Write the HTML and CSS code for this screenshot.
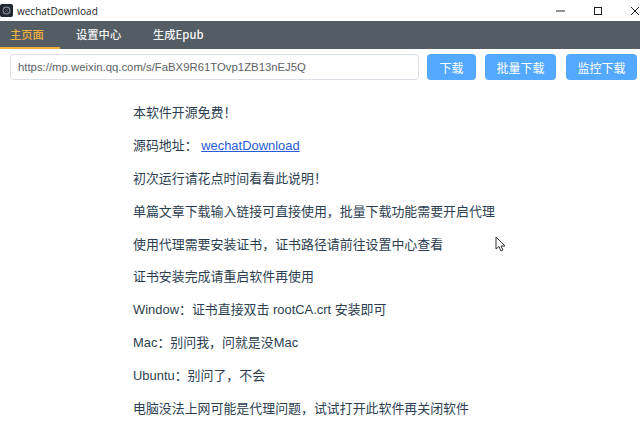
FILE: index.html
```html
<!DOCTYPE html>
<html lang="zh">
<head>
<meta charset="utf-8">
<title>wechatDownload</title>
<link rel="stylesheet" href="styles.css">
</head>
<body>
<div class="app">
  <header class="titlebar">
    <div class="title-left">
      <svg class="logo" width="13" height="13" viewBox="0 0 13 13"><rect width="13" height="13" rx="2" fill="#1f2630"/><circle cx="6.5" cy="6.5" r="3.4" fill="none" stroke="#7d8794" stroke-width="1.2"/><path d="M3 3l7 7M10 3l-7 7" stroke="#56606c" stroke-width="1"/></svg>
      <span class="app-name">wechatDownload</span>
    </div>
    <div class="win-controls">
      <svg class="win-icon" width="10" height="10" viewBox="0 0 10 10"><path d="M0 5h9" stroke="#222" stroke-width="1"/></svg>
      <svg class="win-icon" width="10" height="10" viewBox="0 0 10 10"><rect x="1.5" y="1.5" width="7" height="7" fill="none" stroke="#222" stroke-width="1"/></svg>
      <svg class="win-icon" width="10" height="10" viewBox="0 0 10 10"><path d="M1 1l8 8M9 1l-8 8" stroke="#222" stroke-width="1"/></svg>
    </div>
  </header>
  <nav class="menu">
    <div class="menu-item active">主页面</div>
    <div class="menu-item">设置中心</div>
    <div class="menu-item">生成Epub</div>
  </nav>
  <section class="toolbar">
    <input class="url" type="text" value="https://mp.weixin.qq.com/s/FaBX9R61TOvp1ZB13nEJ5Q">
    <button class="btn btn-s">下载</button>
    <button class="btn btn-m">批量下载</button>
    <button class="btn">监控下载</button>
  </section>
  <main class="content">
    <p>本软件开源免费！</p>
    <p>源码地址： <a href="#">wechatDownload</a></p>
    <p>初次运行请花点时间看看此说明！</p>
    <p>单篇文章下载输入链接可直接使用，批量下载功能需要开启代理</p>
    <p>使用代理需要安装证书，证书路径请前往设置中心查看</p>
    <p>证书安装完成请重启软件再使用</p>
    <p>Window：证书直接双击 rootCA.crt 安装即可</p>
    <p>Mac：别问我，问就是没Mac</p>
    <p>Ubuntu：别问了，不会</p>
    <p>电脑没法上网可能是代理问题，试试打开此软件再关闭软件</p>
  </main>
  <svg class="cursor" width="12" height="17" viewBox="0 0 12 17"><path d="M1 1v12l3-2.5 2 4.5 2-1-2-4h4z" fill="#fff" stroke="#333" stroke-width="1"/></svg>
</div>
</body>
</html>
```
FILE: styles.css
```css
* { box-sizing: border-box; }
html, body { margin: 0; padding: 0; height: 100%; overflow: hidden; background: #fff; }
body { font-family: "Liberation Sans", "Noto Sans CJK SC", sans-serif; }
.app { position: relative; width: 640px; height: 424px; overflow: hidden; }
.titlebar { height: 21px; display: flex; align-items: center; justify-content: space-between; }
.title-left { display: flex; align-items: center; gap: 4px; }
.logo { display: block; }
.app-name { font-size: 10px; color: #222; font-family: "Open Sans", sans-serif; }
.win-controls { display: flex; gap: 27px; align-items: center; width: 84px; }
.win-controls .win-icon { display: block; flex: none; }
.menu { height: 28px; background: #545c64; display: flex; font-size: 11.3px; font-weight: 500; font-family: "Noto Sans CJK SC", sans-serif; }
.menu-item { display: flex; align-items: center; color: #fff; opacity: .95; border-bottom: 2px solid transparent; justify-content: flex-start; padding-left: 16px; }
.menu-item.active { width: 60px; padding-left: 10px; color: #f0b040; border-bottom-color: #f0b040; opacity: 1; }
.menu-item:nth-child(2) { width: 77px; }
.menu-item:nth-child(3) { width: 80px; }
.toolbar { display: flex; align-items: center; padding: 4px 0 0 10px; height: 32px; }
.url { width: 409px; height: 26px; border: 1px solid #dcdfe6; border-radius: 4px; padding: 0 7px; font-size: 11.35px; color: #606266; font-family: "Liberation Sans", sans-serif; outline: none; }
.btn { height: 26px; width: 71px; margin-left: 10px; background: #53a8ff; border: 0; border-radius: 4px; color: #fff; font-size: 12px; font-family: "Noto Sans CJK SC", sans-serif; padding: 0; }
.btn-s { width: 49px; margin-left: 8px; }
.btn-m { margin-left: 9px; }
.content { padding: 23px 0 0 133px; font-size: 12.93px; color: #2c3e50; font-family: "Liberation Sans", "Noto Sans CJK SC", sans-serif; line-height: 17px; }
.content p { margin: 0 0 15.9px; white-space: nowrap; }
.content a { color: #2a5bd7; text-decoration: underline; }
.cursor { position: absolute; left: 495px; top: 236px; }
```
